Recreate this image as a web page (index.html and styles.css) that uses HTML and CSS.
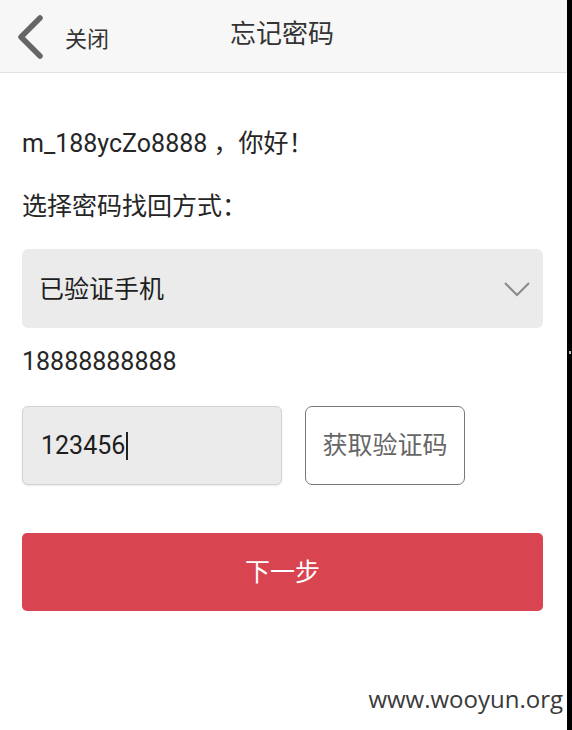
FILE: index.html
```html
<!DOCTYPE html>
<html lang="zh-CN">
<head>
<meta charset="utf-8">
<link rel="stylesheet" href="styles.css">
</head>
<body>
<div class="screen">
  <div class="page">
    <header class="topbar">
      <div class="back">
        <svg class="back-icon" width="28" height="44" viewBox="0 0 28 44"><path d="M24 3 L5 22 L24 41" fill="none" stroke="#666" stroke-width="5.5" stroke-linecap="round" stroke-linejoin="round"/></svg>
        <span class="back-text">关闭</span>
      </div>
      <h1 class="title">忘记密码</h1>
    </header>
    <main class="content">
      <p class="greet">m_188ycZo8888 <span class="cjk">，你好！</span></p>
      <p class="label"><span class="cjk">选择密码找回方式：</span></p>
      <div class="select">
        <span>已验证手机</span>
        <svg width="28" height="16" viewBox="0 0 28 16"><path d="M2 2 L14 14 L26 2" fill="none" stroke="#8a8a8a" stroke-width="2"/></svg>
      </div>
      <p class="phone">18888888888</p>
      <div class="code-row">
        <div class="code-input">123456<span class="caret"></span></div>
        <div class="code-btn"><span>获取验证码</span></div>
      </div>
      <div class="next"><span>下一步</span></div>
    </main>
    <footer class="watermark">www.wooyun.org</footer>
  </div>
  <div class="edge"><span class="dot"></span></div>
</div>
</body>
</html>
```
FILE: styles.css
```css
html, body {
  margin: 0;
  padding: 0;
  background: #fff;
}
body {
  font-family: Roboto, "Noto Sans CJK SC", sans-serif;
  color: #262626;
}
.cjk {
  font-family: "Noto Sans CJK SC", sans-serif;
}
.screen {
  display: flex;
  width: 572px;
  height: 730px;
  overflow: hidden;
}
.page {
  width: 567px;
  display: flex;
  flex-direction: column;
  background: #fff;
}
.edge {
  width: 5px;
  background: #000;
  position: relative;
}
.dot {
  position: absolute;
  left: 2px;
  top: 351px;
  width: 2px;
  height: 3px;
  background: #bbb;
}
.topbar {
  height: 72px;
  background: #f7f7f7;
  border-bottom: 1px solid #e2e2e2;
  display: flex;
  align-items: center;
  position: relative;
}
.back {
  display: flex;
  align-items: center;
  padding-left: 16px;
}
.back-icon {
  display: block;
  margin-top: 1px;
}
.back-text {
  font-size: 22px;
  color: #333;
  margin-left: 21px;
  margin-top: 2px;
}
.title {
  margin: 0;
  font-weight: normal;
  font-size: 26px;
  color: #333;
  position: absolute;
  left: 230px;
  top: 13px;
}
.content {
  padding: 0 24px 0 22px;
  display: flex;
  flex-direction: column;
}
.greet {
  margin: 0;
  margin-top: 51px;
  font-size: 25px;
  line-height: 34px;
  height: 34px;
}
.label {
  margin: 0;
  margin-top: 29px;
  font-size: 25px;
  line-height: 34px;
  height: 34px;
}
.select {
  margin-top: 28px;
  height: 79px;
  background: #ebebeb;
  border-radius: 6px;
  display: flex;
  align-items: center;
  justify-content: space-between;
  padding: 0 12px 0 17px;
  font-size: 25px;
  color: #1e1e1e;
}
.select span {
  margin-top: -3px;
}
.select svg {
  display: block;
}
.phone {
  margin: 0;
  margin-top: 18px;
  font-size: 25px;
  line-height: 32px;
}
.code-row {
  margin-top: 28px;
  display: flex;
  gap: 23px;
}
.code-input {
  box-sizing: border-box;
  width: 260px;
  height: 79px;
  background: #ebebeb;
  border: 1px solid #d2d2d2;
  border-radius: 6px;
  box-shadow: 0 1px 2px rgba(0,0,0,0.08);
  display: flex;
  align-items: center;
  padding-left: 18px;
  font-size: 25px;
  color: #1e1e1e;
}
.caret {
  display: inline-block;
  width: 2px;
  height: 28px;
  background: #222;
  margin-left: 1px;
}
.code-btn {
  box-sizing: border-box;
  width: 160px;
  height: 79px;
  border: 1.5px solid #777;
  border-radius: 7px;
  display: flex;
  align-items: center;
  justify-content: center;
  font-size: 25px;
  color: #666;
  background: #fff;
}
.code-btn span {
  margin-top: -6px;
}
.next {
  margin-top: 48px;
  height: 78px;
  background: #d94451;
  border-radius: 5px;
  display: flex;
  align-items: center;
  justify-content: center;
  color: #fff;
  font-size: 25px;
}
.next span {
  margin-top: -5px;
}
.watermark {
  margin-top: auto;
  margin-bottom: 15px;
  align-self: flex-end;
  margin-right: 4px;
  font-family: "Open Sans", "DejaVu Sans", sans-serif;
  font-size: 24px;
  color: #3a3a3a;
}
```
